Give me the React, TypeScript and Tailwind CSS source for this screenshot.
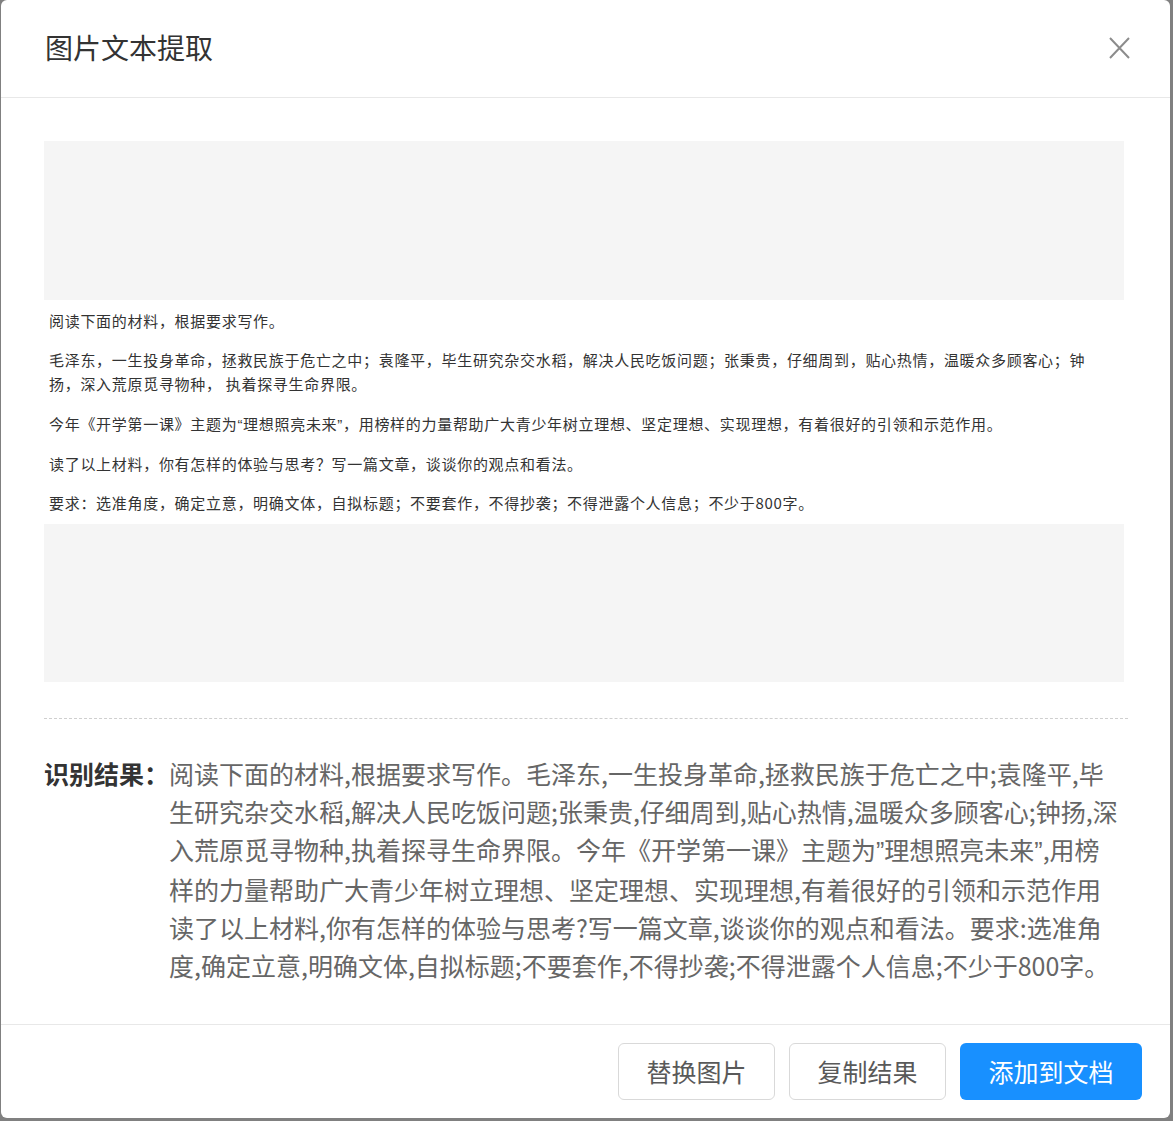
import React from "react";

const font = { fontFamily: '"Noto Sans CJK SC", "Noto Sans", sans-serif' };

function Q({ children }: { children: React.ReactNode }) {
  return <span className="[font-family:'Liberation_Sans',sans-serif]">{children}</span>;
}

export default function App() {
  return (
    <div className="w-[1173px] h-[1121px] bg-[#808080] overflow-hidden" style={font}>
      <div className="ml-[1px] w-[1169px] h-[1118px] rounded-[6px] bg-white flex flex-col">
        {/* Header */}
        <div className="h-[98px] shrink-0 border-b border-[#e8e8e8] flex items-center justify-between pl-[44px] pr-[40px]">
          <div className="text-[28px] leading-[36px] text-[#333] pb-[3px]">图片文本提取</div>
          <svg width="21" height="22" viewBox="0 0 21 22" className="mb-[2px]">
            <path d="M1 1 L20 21 M20 1 L1 21" stroke="#8c8c8c" strokeWidth="2" fill="none" />
          </svg>
        </div>

        {/* Body */}
        <div className="flex-1 px-[43px] pt-[43px]">
          <div className="w-[1080px]">
            <div className="h-[159px] bg-[#f5f5f5]" />
            <div className="pt-[9px] pb-[9px] pl-[5px] text-[15px] leading-[24px] text-[#333] tracking-[0.7px] flex flex-col whitespace-nowrap">
              <p>阅读下面的材料，根据要求写作。</p>
              <p className="mt-[15px]">
                毛泽东，一生投身革命，拯救民族于危亡之中；袁隆平，毕生研究杂交水稻，解决人民吃饭问题；张秉贵，仔细周到，贴心热情，温暖众多顾客心；钟
                <br />
                扬，深入荒原觅寻物种， 执着探寻生命界限。
              </p>
              <p className="mt-[16px]">今年《开学第一课》主题为<Q>“</Q>理想照亮未来<Q>”</Q>，用榜样的力量帮助广大青少年树立理想、坚定理想、实现理想，有着很好的引领和示范作用。</p>
              <p className="mt-[15px]">读了以上材料，你有怎样的体验与思考？写一篇文章，谈谈你的观点和看法。</p>
              <p className="mt-[15px]">要求：选准角度，确定立意，明确文体，自拟标题；不要套作，不得抄袭；不得泄露个人信息；不少于800字。</p>
            </div>
            <div className="h-[158px] bg-[#f5f5f5]" />
          </div>

          <div className="mt-[36px] w-[1084px] border-t border-dashed border-[#cfcfcf]" />

          <div className="mt-[35px] flex text-[25px] leading-[38px]">
            <div className="shrink-0 font-bold text-[#333]">识别结果：</div>
            <div className="text-[#666] whitespace-nowrap">
              <div>阅读下面的材料,根据要求写作。毛泽东,一生投身革命,拯救民族于危亡之中;袁隆平,毕</div>
              <div>生研究杂交水稻,解决人民吃饭问题;张秉贵,仔细周到,贴心热情,温暖众多顾客心;钟扬,深</div>
              <div>入荒原觅寻物种,执着探寻生命界限。今年《开学第一课》主题为<Q>”</Q>理想照亮未来<Q>”</Q>,用榜</div>
              <div>样的力量帮助广大青少年树立理想、坚定理想、实现理想,有着很好的引领和示范作用</div>
              <div>读了以上材料,你有怎样的体验与思考?写一篇文章,谈谈你的观点和看法。要求:选准角</div>
              <div>度,确定立意,明确文体,自拟标题;不要套作,不得抄袭;不得泄露个人信息;不少于800字。</div>
            </div>
          </div>
        </div>

        {/* Footer */}
        <div className="h-[94px] shrink-0 border-t border-[#e8e8e8] flex justify-end items-start gap-[14px] pr-[28px] pt-[18px]">
          <button className="w-[157px] h-[57px] rounded-[6px] border border-[#d9d9d9] bg-white text-[25px] text-[#595959]">替换图片</button>
          <button className="w-[157px] h-[57px] rounded-[6px] border border-[#d9d9d9] bg-white text-[25px] text-[#595959]">复制结果</button>
          <button className="w-[182px] h-[57px] rounded-[6px] bg-[#1890ff] text-[25px] text-white">添加到文档</button>
        </div>
      </div>
    </div>
  );
}
